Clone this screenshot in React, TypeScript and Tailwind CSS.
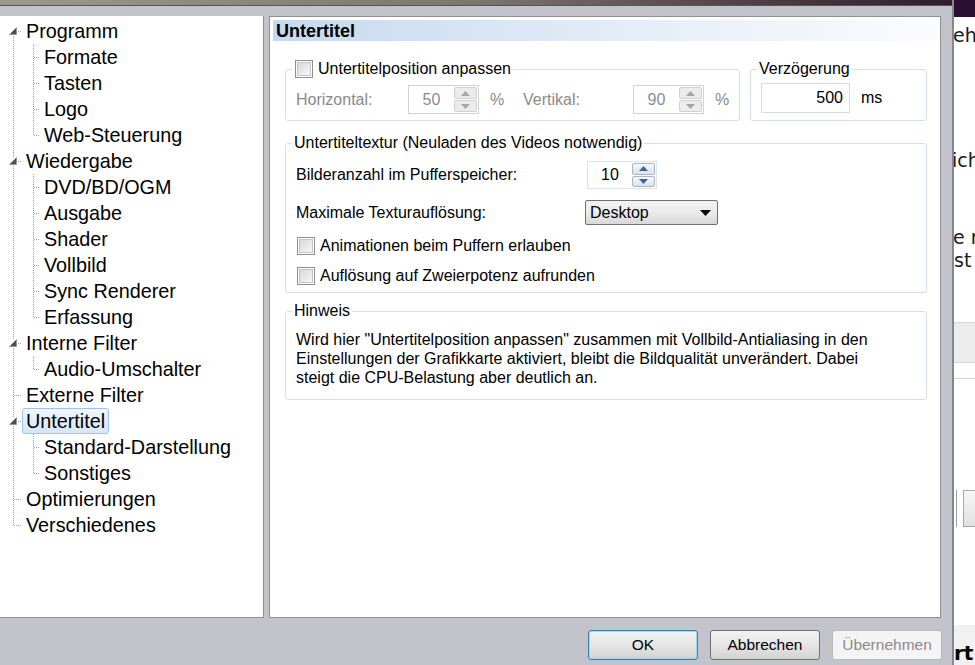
import React from 'react'

type TreeItem = { label: string; level: 0 | 1; expander?: boolean; selected?: boolean }

const treeItems: TreeItem[] = [
  { label: 'Programm', level: 0, expander: true },
  { label: 'Formate', level: 1 },
  { label: 'Tasten', level: 1 },
  { label: 'Logo', level: 1 },
  { label: 'Web-Steuerung', level: 1 },
  { label: 'Wiedergabe', level: 0, expander: true },
  { label: 'DVD/BD/OGM', level: 1 },
  { label: 'Ausgabe', level: 1 },
  { label: 'Shader', level: 1 },
  { label: 'Vollbild', level: 1 },
  { label: 'Sync Renderer', level: 1 },
  { label: 'Erfassung', level: 1 },
  { label: 'Interne Filter', level: 0, expander: true },
  { label: 'Audio-Umschalter', level: 1 },
  { label: 'Externe Filter', level: 0 },
  { label: 'Untertitel', level: 0, expander: true, selected: true },
  { label: 'Standard-Darstellung', level: 1 },
  { label: 'Sonstiges', level: 1 },
  { label: 'Optimierungen', level: 0 },
  { label: 'Verschiedenes', level: 0 },
]

const dot = { stroke: '#a0a0a0', strokeDasharray: '1 1', shapeRendering: 'crispEdges' as const }

function Gutter({ item, first, last, lastChild }: { item: TreeItem; first: boolean; last: boolean; lastChild: boolean }) {
  if (item.level === 0) {
    return (
      <svg width={22} height={26} className="shrink-0">
        {item.expander ? (
          <>
            {!first && <line x1="13.5" y1="0" x2="13.5" y2="9" {...dot} />}
            {!last && <line x1="13.5" y1="18" x2="13.5" y2="26" {...dot} />}
            <line x1="18" y1="13.5" x2="22" y2="13.5" {...dot} />
            <polygon points="16.5,9.5 16.5,16.5 9.5,16.5" fill="#4d4d4d" stroke="#8a8a8a" strokeWidth="0.6" />
          </>
        ) : (
          <>
            <line x1="13.5" y1={first ? 13 : 0} x2="13.5" y2={last ? 14 : 26} {...dot} />
            <line x1="14" y1="13.5" x2="22" y2="13.5" {...dot} />
          </>
        )}
      </svg>
    )
  }
  return (
    <svg width={40} height={26} className="shrink-0">
      <line x1="13.5" y1="0" x2="13.5" y2="26" {...dot} />
      <line x1="33.5" y1="0" x2="33.5" y2={lastChild ? 14 : 26} {...dot} />
      <line x1="34" y1="13.5" x2="40" y2="13.5" {...dot} />
    </svg>
  )
}

function Tree() {
  const rootIdx = treeItems.map((t, i) => (t.level === 0 ? i : -1)).filter((i) => i >= 0)
  const lastRoot = rootIdx[rootIdx.length - 1]
  return (
    <div className="flex h-[602px] w-[264px] shrink-0 flex-col border-r border-b border-[#8e8f8f] bg-white pt-[2px] text-[19.8px] leading-[24px] text-black">
      {treeItems.map((item, i) => {
        const next = treeItems[i + 1]
        const lastChild = item.level === 1 && (!next || next.level === 0)
        return (
          <div key={item.label} className="flex h-[26px] items-center">
            <Gutter item={item} first={i === 0} last={i === lastRoot} lastChild={lastChild} />
            <span
              className={
                item.selected
                  ? 'flex h-[26px] items-center rounded-[3px] border border-[#9fc3e9] bg-gradient-to-b from-[#f0f6fd] to-[#d5e6f9] px-[3px]'
                  : 'flex h-[26px] items-center border border-transparent px-[3px]'
              }
            >
              {item.label}
            </span>
          </div>
        )
      })}
    </div>
  )
}

function CheckBox() {
  return (
    <span className="flex h-[18px] w-[18px] shrink-0 items-center justify-center border border-[#8e8f8f] bg-white">
      <span className="h-[14px] w-[14px] border border-[#c4c4c4] bg-gradient-to-br from-[#d8d8d8] to-[#f7f7f7]" />
    </span>
  )
}

function Arrow({ up, color }: { up?: boolean; color: string }) {
  return (
    <svg width="9" height="5" viewBox="0 0 9 5">
      <polygon points={up ? '0,5 9,5 4.5,0' : '0,0 9,0 4.5,5'} fill={color} />
    </svg>
  )
}

function Spin({ value, disabled }: { value: string; disabled?: boolean }) {
  return (
    <div
      className={
        disabled
          ? 'flex h-[29px] w-[71px] border border-[#d2d2d2] bg-white'
          : 'flex h-[28px] w-[70px] border border-[#dde3ea] bg-white'
      }
    >
      <div className={disabled ? 'flex flex-1 items-center justify-center text-[#8c8c98]' : 'flex flex-1 items-center justify-center text-black'}>
        {value}
      </div>
      <div className="flex w-[24px] flex-col gap-px py-px pr-px">
        {[true, false].map((up) => (
          <div
            key={String(up)}
            className={
              disabled
                ? 'flex flex-1 items-center justify-center rounded-[2px] border border-[#d0d0d0] bg-[#ececec]'
                : 'flex flex-1 items-center justify-center rounded-[2px] border border-[#a9b4c1] bg-gradient-to-b from-[#f6f8fa] to-[#dbe3ec]'
            }
          >
            <Arrow up={up} color={disabled ? '#a6a6a6' : '#3f63a3'} />
          </div>
        ))}
      </div>
    </div>
  )
}

function Group({ title, className, children }: { title: React.ReactNode; className: string; children: React.ReactNode }) {
  return (
    <fieldset className={`rounded-[3px] border border-[#d5dfe5] pl-[10px] ${className}`}>
      <legend className="-ml-[4px] flex h-[20px] items-center px-[2px]">{title}</legend>
      {children}
    </fieldset>
  )
}

function Button({ label, variant }: { label: string; variant: 'default' | 'normal' | 'disabled' }) {
  const cls =
    variant === 'default'
      ? 'flex h-[30px] w-[110px] items-center justify-center rounded-[3px] border border-[#3c7fb1] bg-gradient-to-b from-[#f2f2f2] via-[#e6e6e6] to-[#d2d2d2] text-black shadow-[inset_0_0_0_1px_#9fd6f5]'
      : variant === 'normal'
        ? 'flex h-[30px] w-[110px] items-center justify-center rounded-[3px] border border-[#707070] bg-gradient-to-b from-[#f2f2f2] via-[#e6e6e6] to-[#d2d2d2] text-black'
        : 'flex h-[30px] w-[110px] items-center justify-center rounded-[3px] border border-[#b6babd] bg-[#f4f4f4] text-[#8a8a8a]'
  return <div className={cls}>{label}</div>
}

function SettingsPage() {
  return (
    <div className="flex h-[602px] w-[672px] shrink-0 flex-col border border-[#8e8f8f] bg-white p-[3px] text-[16px] leading-[20px] text-black">
      <div className="flex h-[21px] items-center bg-gradient-to-r from-[#c6d9ee] via-[#e2ecf7] to-[#fbfcfe] pl-[3px] text-[18px] font-bold">
        Untertitel
      </div>

      <div className="flex flex-col pt-[18px] pl-[12px] pr-[10px]">
        <div className="flex gap-[10px]">
          <Group
            className="w-[455px] pb-[6px]"
            title={
              <span className="flex items-center gap-[5px] pl-px">
                <CheckBox />
                <span>Untertitelposition anpassen</span>
              </span>
            }
          >
            <div className="mt-[6px] flex h-[29px] items-center text-[#8a8a8a]">
              <span className="w-[112px]">Horizontal:</span>
              <Spin value="50" disabled />
              <span className="ml-[11px] w-[33px]">%</span>
              <span className="w-[110px]">Vertikal:</span>
              <Spin value="90" disabled />
              <span className="ml-[11px]">%</span>
            </div>
          </Group>
          <Group className="w-[177px] pb-[6px]" title="Verzögerung">
            <div className="mt-[4px] flex h-[30px] items-center">
              <div className="flex h-[30px] w-[89px] items-center justify-end border border-[#d5dce6] pr-[6px]">500</div>
              <span className="ml-[11px]">ms</span>
            </div>
          </Group>
        </div>

        <Group className="mt-[12px] pb-[6px]" title="Untertiteltextur (Neuladen des Videos notwendig)">
          <div className="mt-[8px] flex h-[28px] items-center">
            <span className="w-[289px]">Bilderanzahl im Pufferspeicher:</span>
            <span className="ml-[2px]">
              <Spin value="10" />
            </span>
          </div>
          <div className="mt-[11px] flex h-[25px] items-center">
            <span className="w-[289px]">Maximale Texturauflösung:</span>
            <div className="flex h-[25px] w-[133px] items-center justify-between rounded-[2px] border border-[#707070] bg-gradient-to-b from-[#f3f3f3] via-[#ebebeb] to-[#d8d8d8] pl-[4px] pr-[6px]">
              <span>Desktop</span>
              <svg width="11" height="6" viewBox="0 0 11 6">
                <polygon points="0,0 11,0 5.5,6" fill="#000" />
              </svg>
            </div>
          </div>
          <div className="mt-[11px] flex h-[20px] items-center gap-[5px] pl-px">
            <CheckBox />
            <span>Animationen beim Puffern erlauben</span>
          </div>
          <div className="mt-[10px] flex h-[20px] items-center gap-[5px] pl-px">
            <CheckBox />
            <span>Auflösung auf Zweierpotenz aufrunden</span>
          </div>
        </Group>

        <Group className="mt-[8px] pb-[12px]" title="Hinweis">
          <p className="mt-[9px] leading-[19px]">
            Wird hier "Untertitelposition anpassen" zusammen mit Vollbild-Antialiasing in den
            <br />
            Einstellungen der Grafikkarte aktiviert, bleibt die Bildqualität unverändert. Dabei
            <br />
            steigt die CPU-Belastung aber deutlich an.
          </p>
        </Group>
      </div>
    </div>
  )
}

function BehindPage() {
  return (
    <div className="flex w-[21px] shrink-0 flex-col overflow-hidden whitespace-nowrap bg-white font-['DejaVu_Sans',sans-serif] text-[19px] leading-[22px] text-[#1a1a1a]">
      <div className="h-[17px] shrink-0 bg-[#2c0d34]" />
      <div className="mt-[7px] -ml-px">ehr</div>
      <div className="mt-[103px] -ml-[2px]">ich</div>
      <div className="mt-[55px] -ml-px">e n</div>
      <div className="mt-px">st</div>
      <div className="mt-[51px] h-[41px] shrink-0 border-y border-[#d8d8d8] bg-[#ececec]" />
      <div className="mt-[15px] h-px shrink-0 bg-[#c9d7e6]" />
      <div className="mt-[111px] flex h-[37px] shrink-0 gap-[6px]">
        <div className="w-[3px] border-r border-[#a0a0a0]" />
        <div className="flex-1 border border-r-0 border-[#a8a8a8] bg-gradient-to-b from-[#f6f6f6] to-[#e2e2e2]" />
      </div>
      <div className="mt-[98px] h-[40px] shrink-0 bg-[#f1f1f1] pt-[17px] text-[20px] font-bold text-black">rt</div>
    </div>
  )
}

export default function App() {
  return (
    <div className="flex h-[665px] w-[975px] overflow-hidden font-['Liberation_Sans',Arial,sans-serif]">
      <div className="flex w-[954px] shrink-0 flex-col border-r-2 border-[#86868e] bg-[#c3c3cb]">
        <div className="h-[5px] shrink-0 bg-gradient-to-r from-[#9d988f] via-[#7d766f] to-[#2f1e2a]" />
        <div className="h-px shrink-0 bg-[#55555e]" />
        <div className="flex gap-[5px] pt-[10px]">
          <Tree />
          <SettingsPage />
        </div>
        <div className="flex justify-end gap-[12px] pt-[12px] pr-[10px] text-[15.5px]">
          <Button label="OK" variant="default" />
          <Button label="Abbrechen" variant="normal" />
          <Button label="Übernehmen" variant="disabled" />
        </div>
      </div>
      <BehindPage />
    </div>
  )
}
